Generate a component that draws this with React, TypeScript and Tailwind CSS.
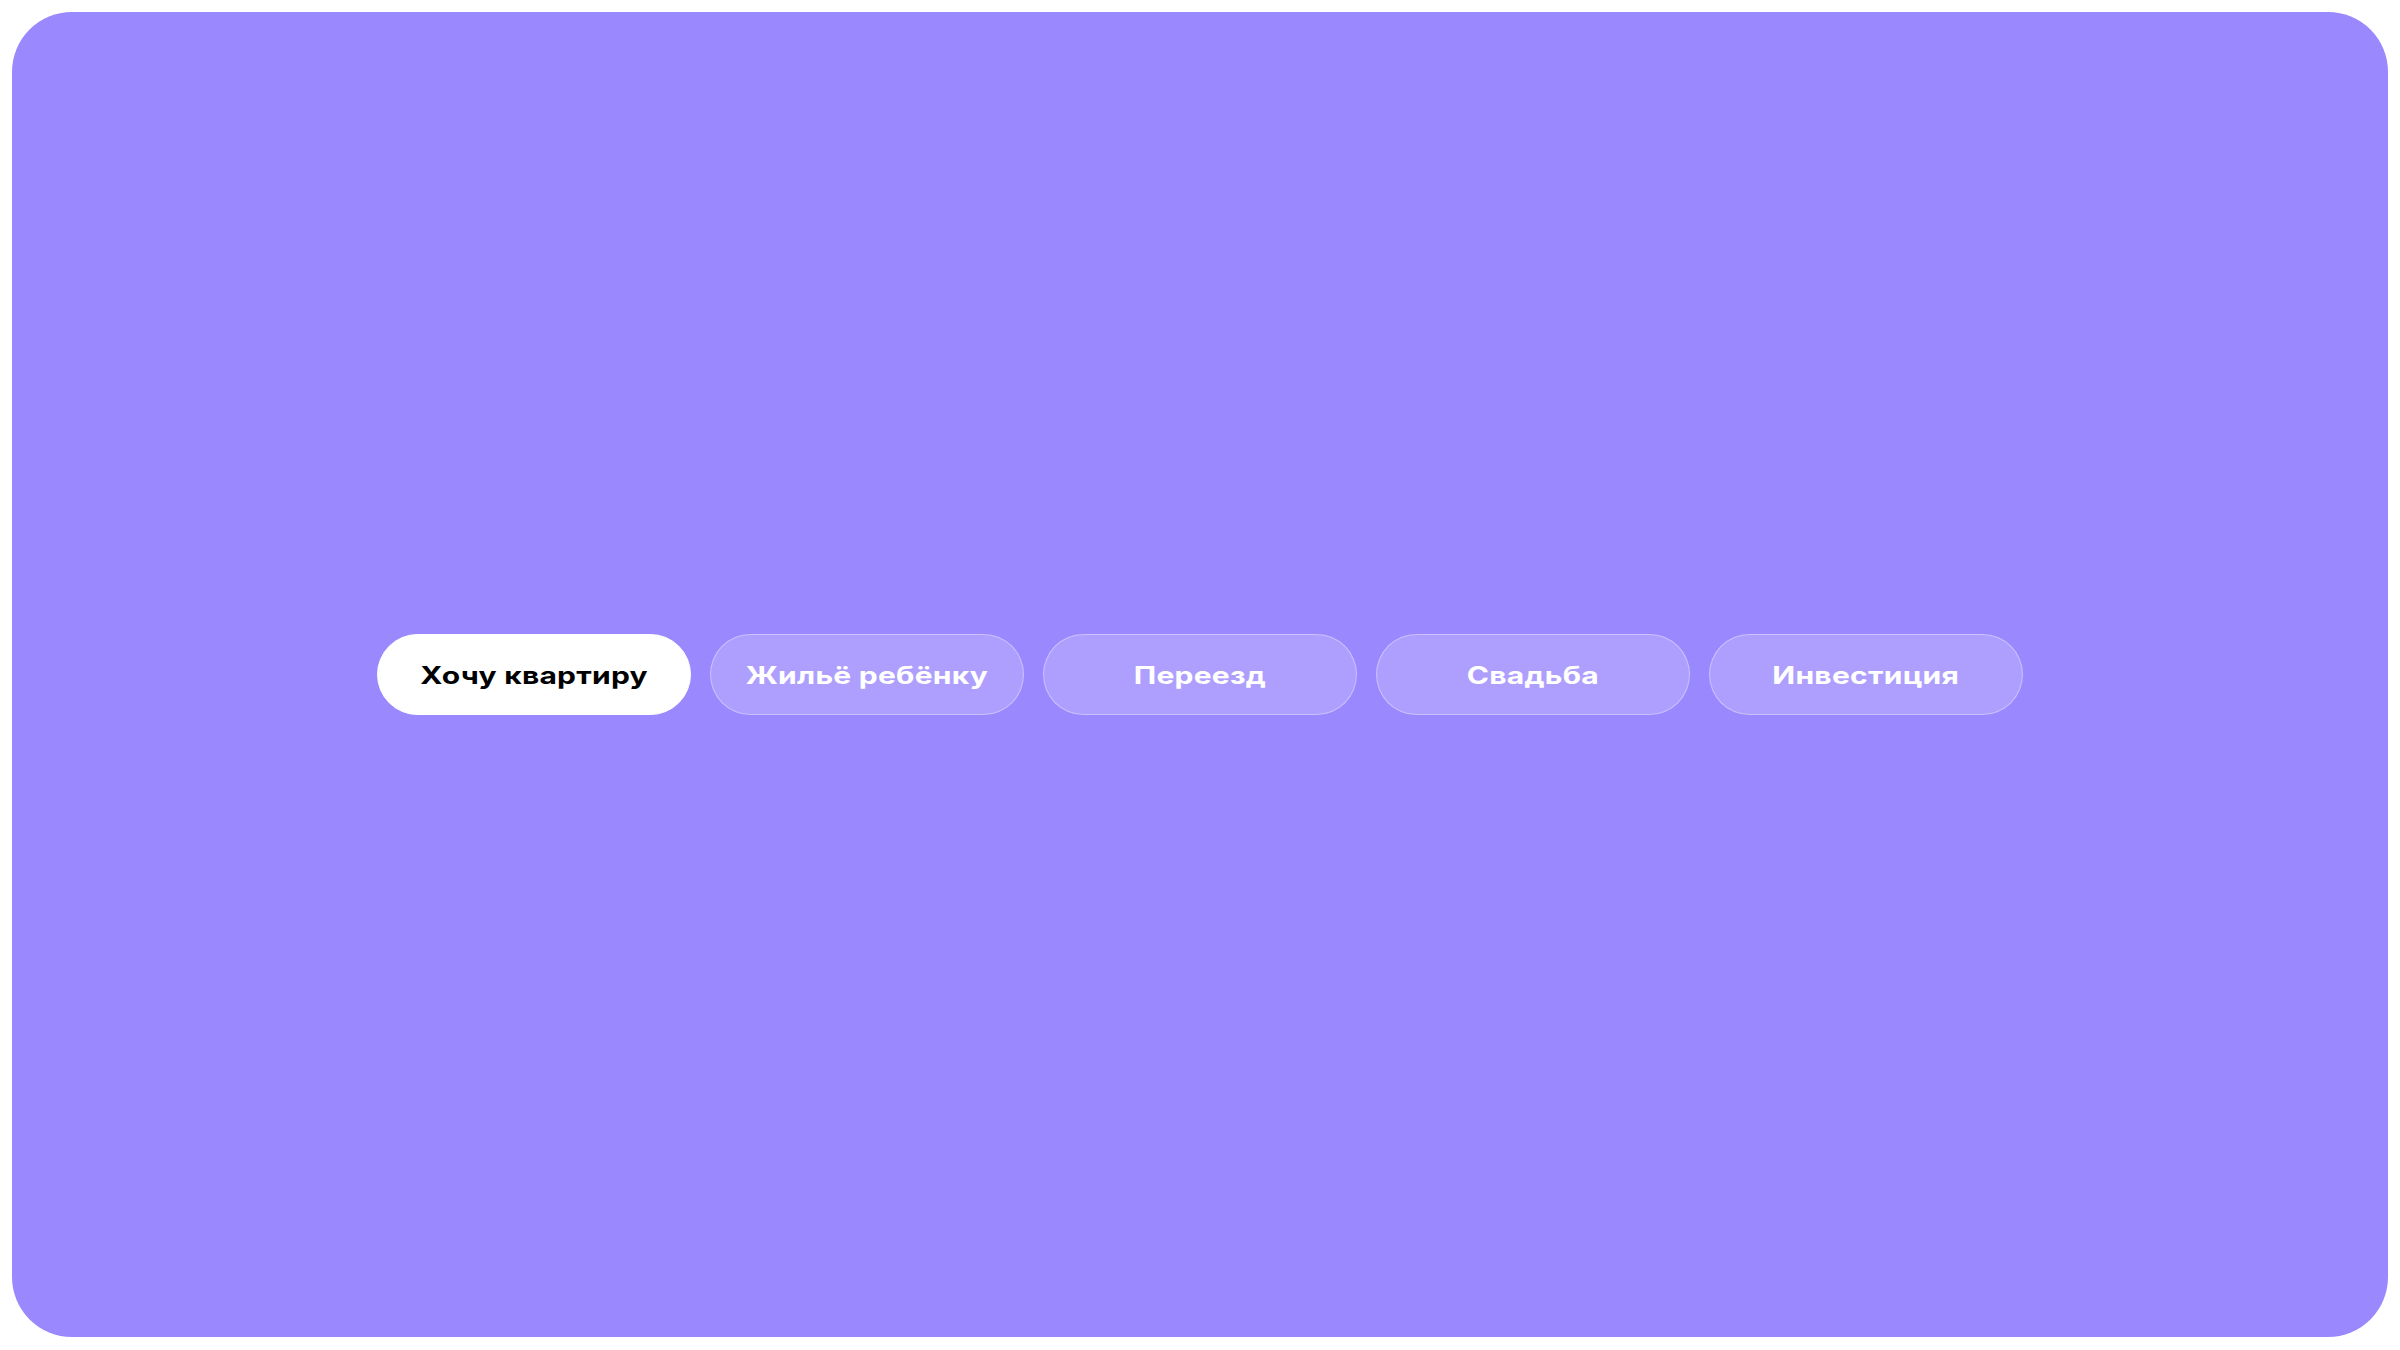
import React from "react";

const items = ["Хочу квартиру", "Жильё ребёнку", "Переезд", "Свадьба", "Инвестиция"];

export default function App() {
  return (
    <div className="w-[2400px] h-[1350px] bg-white p-[12px] pb-[13px]">
      <div className="w-full h-full rounded-[60px] bg-[#9a88fe] flex items-center justify-center">
        <div className="flex gap-[19px]">
          {items.map((t, i) => (
            <button
              key={t}
              className={
                i === 0
                  ? "w-[314px] h-[81px] rounded-full bg-white border-[1.5px] border-white flex items-center justify-center pt-[3px]"
                  : "w-[314px] h-[81px] rounded-full bg-white/20 border-[1.5px] border-white/35 flex items-center justify-center pt-[3px]"
              }
            >
              <span
                className={
                  "inline-block scale-x-[1.25] font-['Inter',sans-serif] font-bold text-[24px] tracking-[0.2px] " +
                  (i === 0 ? "text-black" : "text-white")
                }
              >
                {t}
              </span>
            </button>
          ))}
        </div>
      </div>
    </div>
  );
}
